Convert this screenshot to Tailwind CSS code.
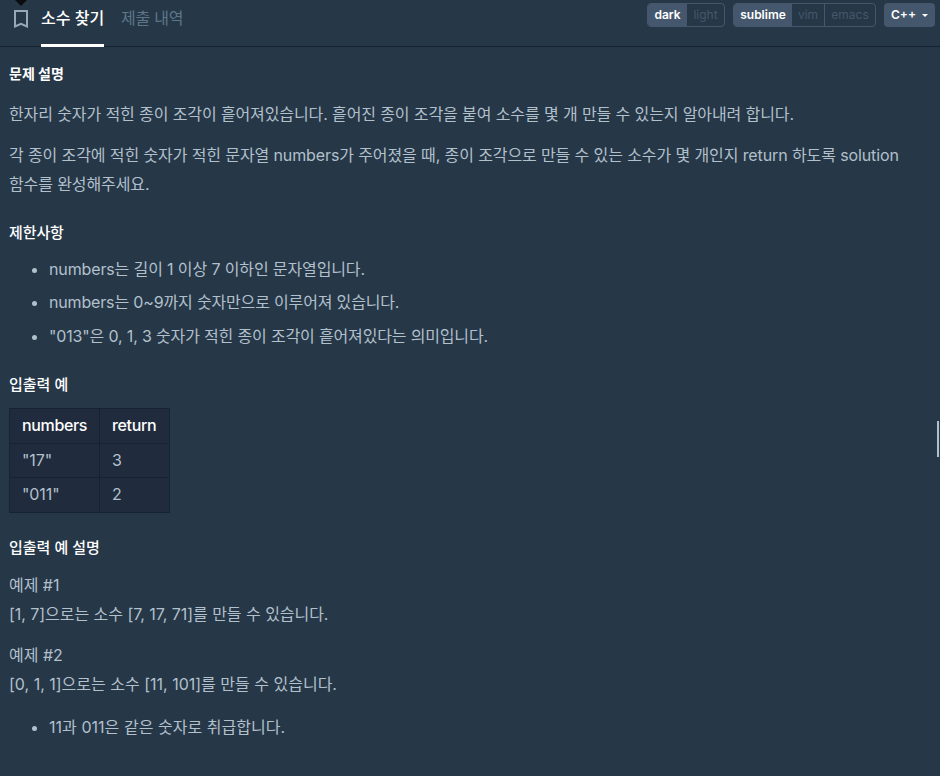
<!DOCTYPE html>
<html lang="ko">
<head>
    <meta charset="UTF-8">
    <title>소수 찾기</title>
    <script src="https://cdn.jsdelivr.net/npm/@tailwindcss/browser@4"></script>
    <style>
        body {
            font-family: Inter, 'Noto Sans CJK KR', sans-serif;
        }
    </style>
</head>
<body class="bg-[#263747] text-[#b2c0cc]">
    <div class="relative w-[940px] h-[776px] overflow-hidden">
        <header class="flex justify-between h-[47px] border-b border-[#172334]">
            <nav class="flex h-[47px]">
                <svg class="ml-[14px] mt-[10px] w-[14px] h-[18px]" viewBox="0 0 14 18" fill="none" stroke="#98a8b9" stroke-width="2">
                    <path d="M1 1H13V16.5L7 13.8L1 16.5Z"/>
                </svg>
                <a class="ml-[13px] w-[63px] h-[47px] border-b-3 border-white text-base leading-9 font-medium text-white whitespace-nowrap">소수 찾기</a>
                <a class="ml-[17px] text-base leading-9 tracking-[-0.2px] text-[#5b7888] whitespace-nowrap">제출 내역</a>
            </nav>

            <div class="flex gap-2 pt-[3px] pr-[5px] text-xs leading-[22px] text-[#44576c]">
                <div class="flex w-[78px] h-6 border border-[#44576c] rounded-sm overflow-hidden">
                    <span class="w-[39px] text-center bg-[#44576c] font-semibold text-white">dark</span>
                    <span class="flex-1 text-center">light</span>
                </div>
                <div class="flex w-[143px] h-6 border border-[#44576c] rounded-sm overflow-hidden">
                    <span class="w-[58px] text-center bg-[#44576c] font-semibold text-white">sublime</span>
                    <span class="w-[33px] text-center border-r border-[#44576c]">vim</span>
                    <span class="flex-1 text-center">emacs</span>
                </div>
                <div class="flex items-center w-[51px] h-6 pl-[7px] gap-[6px] bg-[#44576c] rounded-sm font-semibold text-white">
                    <span>C++</span>
                    <svg class="w-[6px] h-[3px]" viewBox="0 0 6 3" fill="currentColor"><path d="M0 0H6L3 3Z"/></svg>
                </div>
            </div>
        </header>

        <main class="px-[9px] pt-[15px] text-base leading-[29px]">
            <h6 class="text-sm leading-6 font-bold text-white">문제 설명</h6>
            <p class="mt-[14px] tracking-[-0.11px]">한자리 숫자가 적힌 종이 조각이 흩어져있습니다. 흩어진 종이 조각을 붙여 소수를 몇 개 만들 수 있는지 알아내려 합니다.</p>
            <p class="mt-3 tracking-[-0.11px]">각 종이 조각에 적힌 숫자가 적힌 문자열 numbers가 주어졌을 때, 종이 조각으로 만들 수 있는 소수가 몇 개인지 return 하도록 solution<br>함수를 완성해주세요.</p>

            <h6 class="mt-[22px] text-[15px] leading-6 tracking-[-0.1px] font-medium text-white">제한사항</h6>
            <ul class="mt-[10px] pl-10 list-disc tracking-[-0.16px]">
                <li class="tracking-[-0.13px]">numbers는 길이 1 이상 7 이하인 문자열입니다.</li>
                <li class="mt-1">numbers는 0~9까지 숫자만으로 이루어져 있습니다.</li>
                <li class="mt-[5px]">"013"은 0, 1, 3 숫자가 적힌 종이 조각이 흩어져있다는 의미입니다.</li>
            </ul>

            <h6 class="mt-[22px] text-[15px] leading-6 font-medium text-white">입출력 예</h6>
            <table class="mt-[11px] w-[161px] table-fixed border-collapse bg-[#202b3d] leading-6 tracking-[-0.1px]">
                <thead class="tracking-[-0.35px] text-white">
                    <tr class="h-[35px]">
                        <th class="w-[90px] p-0 pl-3 pb-[2px] border border-[#172334] text-left font-medium">numbers</th>
                        <th class="p-0 pl-3 pb-[2px] border border-[#172334] text-left font-medium">return</th>
                    </tr>
                </thead>
                <tbody>
                    <tr class="h-[34px]">
                        <td class="p-0 pl-3 pb-[2px] border border-[#172334]">"17"</td>
                        <td class="p-0 pl-3 pb-[2px] border border-[#172334]">3</td>
                    </tr>
                    <tr class="h-[35px]">
                        <td class="p-0 pl-3 pb-[2px] border border-[#172334]">"011"</td>
                        <td class="p-0 pl-3 pb-[2px] border border-[#172334]">2</td>
                    </tr>
                </tbody>
            </table>

            <h6 class="mt-[23px] text-[15px] leading-6 font-medium text-white">입출력 예 설명</h6>
            <p class="mt-[11px] tracking-[-0.04px]">예제 #1<br>[1, 7]으로는 소수 [7, 17, 71]를 만들 수 있습니다.</p>
            <p class="mt-3">예제 #2<br>[0, 1, 1]으로는 소수 [11, 101]를 만들 수 있습니다.</p>
            <ul class="mt-[14px] pl-10 list-disc tracking-[0.04px]">
                <li>11과 011은 같은 숫자로 취급합니다.</li>
            </ul>
        </main>

        <!-- tooltip arrow at the top edge and splitter handle on the right -->
        <svg class="absolute left-[15px] top-0 w-3 h-[6px]" viewBox="0 0 12 6" fill="#0a0c10"><path d="M0 0H12L6 6Z"/></svg>
        <div class="absolute left-[937px] top-[421px] w-[2px] h-9 bg-[#b2c0cc]"></div>
    </div>
</body>
</html>
